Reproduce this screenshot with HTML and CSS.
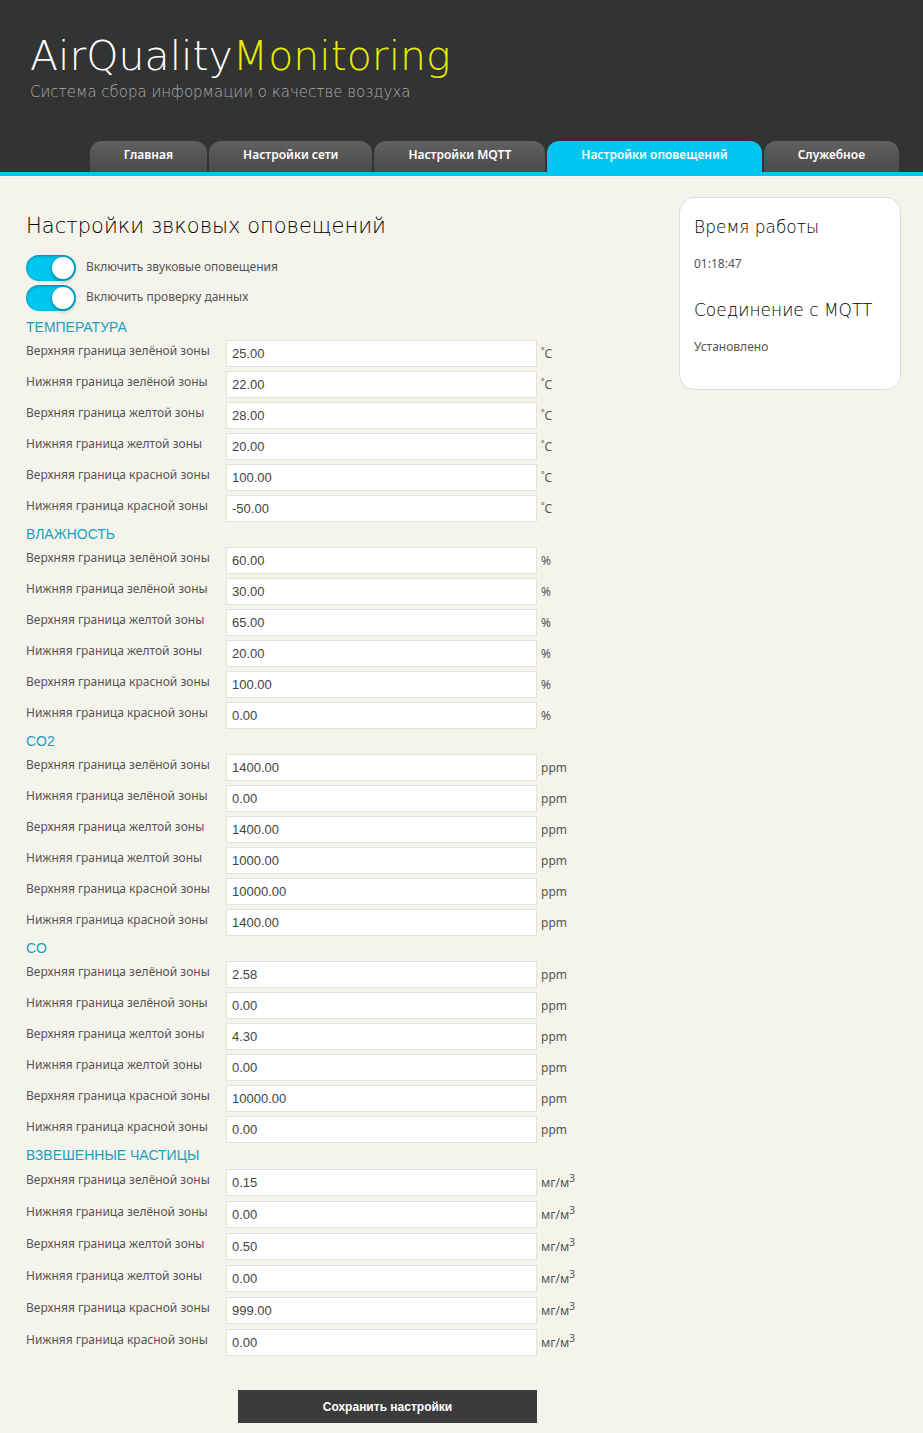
FILE: index.html
```html
<!DOCTYPE html>
<html lang="ru">
<head>
<meta charset="utf-8">
<meta name="viewport" content="width=device-width, initial-scale=1">
<title>AirQualityMonitoring</title>
<link rel="stylesheet" href="styles.css">
</head>
<body>
<header class="header">
  <div class="brand">
    <h1 class="logo">AirQuality<span class="logo-accent">Monitoring</span></h1>
    <p class="slogan">Система сбора информации о качестве воздуха</p>
  </div>
  <nav class="nav">
    <a class="tab" href="#">Главная</a>
    <a class="tab" href="#">Настройки сети</a>
    <a class="tab" href="#">Настройки MQTT</a>
    <a class="tab tab-active" href="#" aria-current="page">Настройки оповещений</a>
    <a class="tab" href="#">Служебное</a>
  </nav>
</header>
<div class="content">
  <main class="main">
    <h2 class="title">Настройки звковых оповещений</h2>
    <form>
      <div class="switches">
        <label class="switch-row"><input class="switch" type="checkbox" checked><span>Включить звуковые оповещения</span></label>
        <label class="switch-row"><input class="switch" type="checkbox" checked><span>Включить проверку данных</span></label>
      </div>

      <section class="group">
        <h3 class="group-title">ТЕМПЕРАТУРА</h3>
        <div class="row"><label for="t1">Верхняя граница зелёной зоны</label><input class="field" id="t1" type="text" value="25.00"><span class="unit">˚C</span></div>
        <div class="row"><label for="t2">Нижняя граница зелёной зоны</label><input class="field" id="t2" type="text" value="22.00"><span class="unit">˚C</span></div>
        <div class="row"><label for="t3">Верхняя граница желтой зоны</label><input class="field" id="t3" type="text" value="28.00"><span class="unit">˚C</span></div>
        <div class="row"><label for="t4">Нижняя граница желтой зоны</label><input class="field" id="t4" type="text" value="20.00"><span class="unit">˚C</span></div>
        <div class="row"><label for="t5">Верхняя граница красной зоны</label><input class="field" id="t5" type="text" value="100.00"><span class="unit">˚C</span></div>
        <div class="row"><label for="t6">Нижняя граница красной зоны</label><input class="field" id="t6" type="text" value="-50.00"><span class="unit">˚C</span></div>
      </section>

      <section class="group">
        <h3 class="group-title">ВЛАЖНОСТЬ</h3>
        <div class="row"><label for="h1">Верхняя граница зелёной зоны</label><input class="field" id="h1" type="text" value="60.00"><span class="unit">%</span></div>
        <div class="row"><label for="h2">Нижняя граница зелёной зоны</label><input class="field" id="h2" type="text" value="30.00"><span class="unit">%</span></div>
        <div class="row"><label for="h3">Верхняя граница желтой зоны</label><input class="field" id="h3" type="text" value="65.00"><span class="unit">%</span></div>
        <div class="row"><label for="h4">Нижняя граница желтой зоны</label><input class="field" id="h4" type="text" value="20.00"><span class="unit">%</span></div>
        <div class="row"><label for="h5">Верхняя граница красной зоны</label><input class="field" id="h5" type="text" value="100.00"><span class="unit">%</span></div>
        <div class="row"><label for="h6">Нижняя граница красной зоны</label><input class="field" id="h6" type="text" value="0.00"><span class="unit">%</span></div>
      </section>

      <section class="group">
        <h3 class="group-title">CO2</h3>
        <div class="row"><label for="d1">Верхняя граница зелёной зоны</label><input class="field" id="d1" type="text" value="1400.00"><span class="unit">ppm</span></div>
        <div class="row"><label for="d2">Нижняя граница зелёной зоны</label><input class="field" id="d2" type="text" value="0.00"><span class="unit">ppm</span></div>
        <div class="row"><label for="d3">Верхняя граница желтой зоны</label><input class="field" id="d3" type="text" value="1400.00"><span class="unit">ppm</span></div>
        <div class="row"><label for="d4">Нижняя граница желтой зоны</label><input class="field" id="d4" type="text" value="1000.00"><span class="unit">ppm</span></div>
        <div class="row"><label for="d5">Верхняя граница красной зоны</label><input class="field" id="d5" type="text" value="10000.00"><span class="unit">ppm</span></div>
        <div class="row"><label for="d6">Нижняя граница красной зоны</label><input class="field" id="d6" type="text" value="1400.00"><span class="unit">ppm</span></div>
      </section>

      <section class="group">
        <h3 class="group-title">CO</h3>
        <div class="row"><label for="c1">Верхняя граница зелёной зоны</label><input class="field" id="c1" type="text" value="2.58"><span class="unit">ppm</span></div>
        <div class="row"><label for="c2">Нижняя граница зелёной зоны</label><input class="field" id="c2" type="text" value="0.00"><span class="unit">ppm</span></div>
        <div class="row"><label for="c3">Верхняя граница желтой зоны</label><input class="field" id="c3" type="text" value="4.30"><span class="unit">ppm</span></div>
        <div class="row"><label for="c4">Нижняя граница желтой зоны</label><input class="field" id="c4" type="text" value="0.00"><span class="unit">ppm</span></div>
        <div class="row"><label for="c5">Верхняя граница красной зоны</label><input class="field" id="c5" type="text" value="10000.00"><span class="unit">ppm</span></div>
        <div class="row"><label for="c6">Нижняя граница красной зоны</label><input class="field" id="c6" type="text" value="0.00"><span class="unit">ppm</span></div>
      </section>

      <section class="group group-dust">
        <h3 class="group-title">ВЗВЕШЕННЫЕ ЧАСТИЦЫ</h3>
        <div class="row"><label for="p1">Верхняя граница зелёной зоны</label><input class="field" id="p1" type="text" value="0.15"><span class="unit">мг/м<sup>3</sup></span></div>
        <div class="row"><label for="p2">Нижняя граница зелёной зоны</label><input class="field" id="p2" type="text" value="0.00"><span class="unit">мг/м<sup>3</sup></span></div>
        <div class="row"><label for="p3">Верхняя граница желтой зоны</label><input class="field" id="p3" type="text" value="0.50"><span class="unit">мг/м<sup>3</sup></span></div>
        <div class="row"><label for="p4">Нижняя граница желтой зоны</label><input class="field" id="p4" type="text" value="0.00"><span class="unit">мг/м<sup>3</sup></span></div>
        <div class="row"><label for="p5">Верхняя граница красной зоны</label><input class="field" id="p5" type="text" value="999.00"><span class="unit">мг/м<sup>3</sup></span></div>
        <div class="row"><label for="p6">Нижняя граница красной зоны</label><input class="field" id="p6" type="text" value="0.00"><span class="unit">мг/м<sup>3</sup></span></div>
      </section>

      <div class="actions"><button class="save" type="submit">Сохранить настройки</button></div>
    </form>
  </main>
  <aside class="sidebar">
    <h2 class="side-title">Время работы</h2>
    <p class="side-text">01:18:47</p>
    <h2 class="side-title">Соединение с MQTT</h2>
    <p class="side-text">Установлено</p>
  </aside>
</div>
</body>
</html>
```
FILE: styles.css
```css
* { box-sizing: border-box; }

body {
  margin: 0;
  background: #f5f4ec;
  color: #555;
  font-family: "Noto Sans", "Open Sans", sans-serif;
  font-size: 12px;
  line-height: 22px;
}

h1, h2, h3, p { margin: 0; }

.header {
  background: #323333;
  border-bottom: 4px solid #00c6f0;
  box-shadow: 0 1px 0 #fff;
}

.brand {
  padding: 32px 30px 38px;
}

.logo {
  color: #fff;
  font-family: "DejaVu Sans", sans-serif;
  font-size: 41px;
  font-weight: 200;
  line-height: 49px;
}

.logo-accent { color: #e4ec04; }

.slogan {
  color: #aaa;
  font-family: "DejaVu Sans", sans-serif;
  font-size: 15px;
  font-weight: 200;
}

.nav {
  display: flex;
  justify-content: flex-end;
  gap: 2px;
  padding: 0 24px;
}

.tab {
  height: 31px;
  padding: 3px 34px 0;
  border-radius: 12px 12px 0 0;
  background: linear-gradient(#606060, #4a4a4a);
  color: #fff;
  font-weight: 600;
  text-decoration: none;
  white-space: nowrap;
}

.tab-active { background: #00c6f0; }

.content {
  display: flex;
  justify-content: space-between;
  align-items: flex-start;
  padding: 21px 22px 10px 26px;
}

.main { padding-top: 14px; }

.title,
.side-title {
  color: #000;
  font-family: "DejaVu Sans", sans-serif;
  font-weight: 200;
}

.title {
  font-size: 21px;
  line-height: 30px;
}

.switches {
  display: grid;
  gap: 4px;
  margin: 14px 0 8px;
}

.switch-row {
  display: flex;
  gap: 10px;
  line-height: 24px;
}

.switch {
  appearance: none;
  width: 50px;
  height: 26px;
  margin: 0;
  padding: 2px;
  border-radius: 13px;
  background: #00c6f0;
  box-shadow: inset 0 1px 3px rgba(0, 0, 0, 0.35);
}

.switch::before {
  content: "";
  display: block;
  width: 22px;
  height: 22px;
  border-radius: 50%;
  background: #fff;
}

.switch:checked::before {
  margin-left: auto;
  box-shadow: 0 2px 4px rgba(0, 0, 0, 0.35);
}

.group-title {
  height: 21px;
  color: #1a9fbf;
  font-family: "Liberation Sans", sans-serif;
  font-size: 14px;
  font-weight: 400;
  line-height: 17px;
}

.row {
  display: grid;
  grid-template-columns: 200px 311px auto;
  height: 27px;
  margin-bottom: 4px;
}

.group-dust .group-title { height: 22px; }

.group-dust .row { margin-bottom: 5px; }

.field {
  min-width: 0;
  padding: 0 5px;
  border: 1px solid #e4e3da;
  background: #fff;
  color: #47433f;
  font-family: "Liberation Sans", sans-serif;
  font-size: 13px;
}

.unit {
  padding-left: 4px;
  line-height: 27px;
}

.unit sup {
  font-size: 10px;
  line-height: 0;
}

.actions {
  padding: 29px 0 0 212px;
}

.save {
  width: 299px;
  height: 33px;
  border: 0;
  background: #3b3b3b;
  color: #fff;
  font-family: "Liberation Sans", sans-serif;
  font-size: 12px;
  font-weight: 700;
}

.sidebar {
  width: 222px;
  padding: 17px 14px 8px;
  border: 1px solid #dcdcdc;
  border-radius: 15px;
  background: #fff;
}

.side-title {
  font-size: 17px;
  line-height: 24px;
  white-space: nowrap;
}

.side-text { margin: 14px 0 23px; }
```
